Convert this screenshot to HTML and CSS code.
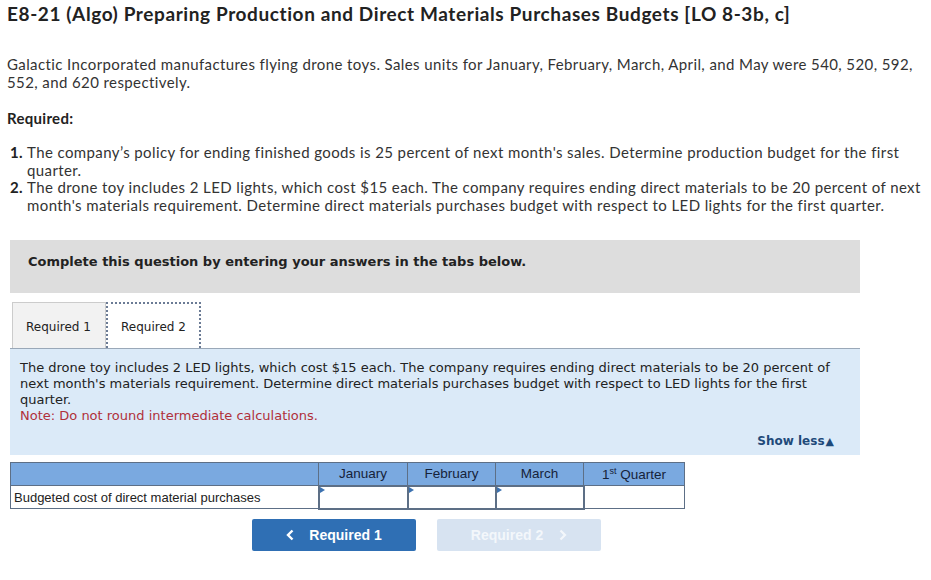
FILE: index.html
```html
<!DOCTYPE html>
<html>
<head>
<meta charset="utf-8">
<link rel="stylesheet" href="styles.css">
</head>
<body>
<div class="page">
  <h1 class="title">E8-21 (Algo) Preparing Production and Direct Materials Purchases Budgets [LO 8-3b, c]</h1>
  <p class="intro">Galactic Incorporated manufactures flying drone toys. Sales units for January, February, March, April, and May were 540, 520, 592, 552, and 620 respectively.</p>
  <p class="req-label">Required:</p>
  <ol class="req-list">
    <li><span class="num">1.</span><span>The company’s policy for ending finished goods is 25 percent of next month's sales. Determine production budget for the first quarter.</span></li>
    <li><span class="num">2.</span><span>The drone toy includes 2 LED lights, which cost $15 each. The company requires ending direct materials to be 20 percent of next month's materials requirement. Determine direct materials purchases budget with respect to LED lights for the first quarter.</span></li>
  </ol>

  <div class="instructions">Complete this question by entering your answers in the tabs below.</div>

  <div class="tabs">
    <div class="tab">Required 1</div>
    <div class="tab active">Required 2</div>
  </div>
  <div class="panel">
    <p class="panel-text">The drone toy includes 2 LED lights, which cost $15 each. The company requires ending direct materials to be 20 percent of next month's materials requirement. Determine direct materials purchases budget with respect to LED lights for the first quarter.</p>
    <p class="note">Note: Do not round intermediate calculations.</p>
    <div class="show-less">Show less<span class="tri">▲</span></div>
  </div>

  <table class="budget">
    <colgroup>
      <col class="c-label">
      <col class="c-jan">
      <col class="c-mon">
      <col class="c-mon">
      <col class="c-q">
    </colgroup>
    <tr class="head">
      <th></th>
      <th>January</th>
      <th>February</th>
      <th>March</th>
      <th>1<sup>st</sup> Quarter</th>
    </tr>
    <tr>
      <td class="label">Budgeted cost of direct material purchases</td>
      <td class="input"><span class="mark"></span></td>
      <td class="input"><span class="mark"></span></td>
      <td class="input"><span class="mark"></span></td>
      <td class="total"></td>
    </tr>
  </table>

  <div class="nav">
    <div class="btn prev"><svg class="chev" width="8" height="12" viewBox="0 0 8 12"><polyline points="6.5,1.5 2,6 6.5,10.5" fill="none" stroke="#ffffff" stroke-width="2.4"/></svg>Required 1</div>
    <div class="btn next">Required 2<svg class="chev" width="8" height="12" viewBox="0 0 8 12"><polyline points="1.5,1.5 6,6 1.5,10.5" fill="none" stroke="#f3f7fb" stroke-width="2.2"/></svg></div>
  </div>
</div>
</body>
</html>
```

FILE: styles.css
```css
html, body {
  margin: 0;
  padding: 0;
  background: #ffffff;
}
.page {
  padding: 0 0 0 7px;
  font-family: "Lato", "Open Sans", sans-serif;
  color: #333333;
}
.title {
  margin: 3px 0 0 0;
  font-size: 19px;
  font-weight: 700;
  color: #222222;
  line-height: 22px;
  letter-spacing: 0.6px;
}
.intro {
  margin: 30px 0 0 0;
  font-size: 15px;
  line-height: 18px;
  width: 915px;
  letter-spacing: 0.4px;
}
.req-label {
  margin: 18px 0 0 0;
  font-size: 15px;
  font-weight: 700;
  line-height: 18px;
  color: #222222;
  letter-spacing: 0.3px;
}
.req-list {
  list-style: none;
  margin: 17px 0 0 0;
  padding: 0 0 0 3px;
  font-size: 15px;
  line-height: 17.7px;
  letter-spacing: 0.4px;
  width: 918px;
}
.req-list li {
  display: flex;
}
.req-list .num {
  font-weight: 700;
  width: 17px;
  flex: none;
  color: #222222;
}
.instructions {
  margin: 25px 0 0 3px;
  width: 850px;
  height: 53px;
  box-sizing: border-box;
  background: #dddddd;
  padding: 14px 0 0 18px;
  font-family: "DejaVu Sans", Verdana, sans-serif;
  font-size: 13px;
  font-weight: 700;
  color: #222222;
}
.tabs {
  display: flex;
  margin: 9px 0 0 5px;
  height: 46px;
}
.tab {
  font-family: "DejaVu Sans", Verdana, sans-serif;
  font-size: 12px;
  color: #222222;
  box-sizing: border-box;
  height: 46px;
  padding: 17px 0 0 13px;
  background: #f2f2f2;
  border: 1px solid #cccccc;
  border-bottom: none;
  width: 94px;
}
.tab.active {
  background: #ffffff;
  border: 2px dotted #6b7b95;
  border-bottom: none;
  padding: 16px 0 0 13px;
  width: 95px;
}
.panel {
  margin: 0 0 0 3px;
  width: 850px;
  box-sizing: border-box;
  height: 107px;
  background: #dbeaf8;
  border-top: 1px solid #9aa8b8;
  padding: 11px 10px 0 10px;
  font-family: "DejaVu Sans", Verdana, sans-serif;
  font-size: 13px;
  line-height: 16px;
  color: #222222;
  display: flex;
  flex-direction: column;
}
.panel-text {
  margin: 0;
  width: 820px;
}
.note {
  margin: 0;
  color: #b0303a;
}
.show-less {
  align-self: flex-end;
  margin: 9px 16px 0 0;
  font-weight: 700;
  font-size: 12px;
  color: #1f4a7a;
}
.tri {
  font-size: 11px;
  margin-left: 1px;
}
.budget {
  margin: 7px 0 0 3px;
  border-collapse: collapse;
  table-layout: fixed;
  width: 675px;
  font-family: "Liberation Sans", Arial, sans-serif;
  font-size: 13px;
  color: #222222;
}
.c-label { width: 308px; }
.c-jan { width: 89px; }
.c-mon { width: 88px; }
.c-q { width: 101px; }
.budget th {
  background: #7aa9e0;
  border: 1px solid #5d6f86;
  height: 22px;
  padding: 0;
  font-weight: 400;
  color: #16233a;
  font-size: 13.5px;
}
.budget sup {
  font-size: 9px;
  line-height: 0;
}
.budget td {
  border: 1px solid #5d6f86;
  height: 21px;
  padding: 0;
}
.budget td.label {
  padding: 0 0 0 3px;
  font-size: 13px;
}
.budget td.input {
  border: 2px solid #5d6f86;
  position: relative;
}
.mark {
  position: absolute;
  left: 0;
  top: 0;
  width: 0;
  height: 0;
  border-top: 3px solid transparent;
  border-bottom: 3px solid transparent;
  border-left: 5px solid #3d72b0;
}
.nav {
  display: flex;
  gap: 21px;
  margin: 9px 0 0 245px;
}
.btn {
  width: 164px;
  height: 32px;
  box-sizing: border-box;
  border-radius: 2px;
  display: flex;
  align-items: center;
  justify-content: center;
  font-family: "Liberation Sans", Arial, sans-serif;
  font-weight: 700;
  font-size: 14px;
  color: #ffffff;
}
.btn.prev {
  background: #2f6fb4;
}
.btn.next {
  background: #d7e3f1;
  color: #f3f7fb;
}
.btn .chev {
  margin: 0 15px 0 0;
}
.btn.next .chev {
  margin: 0 0 0 16px;
}
```
